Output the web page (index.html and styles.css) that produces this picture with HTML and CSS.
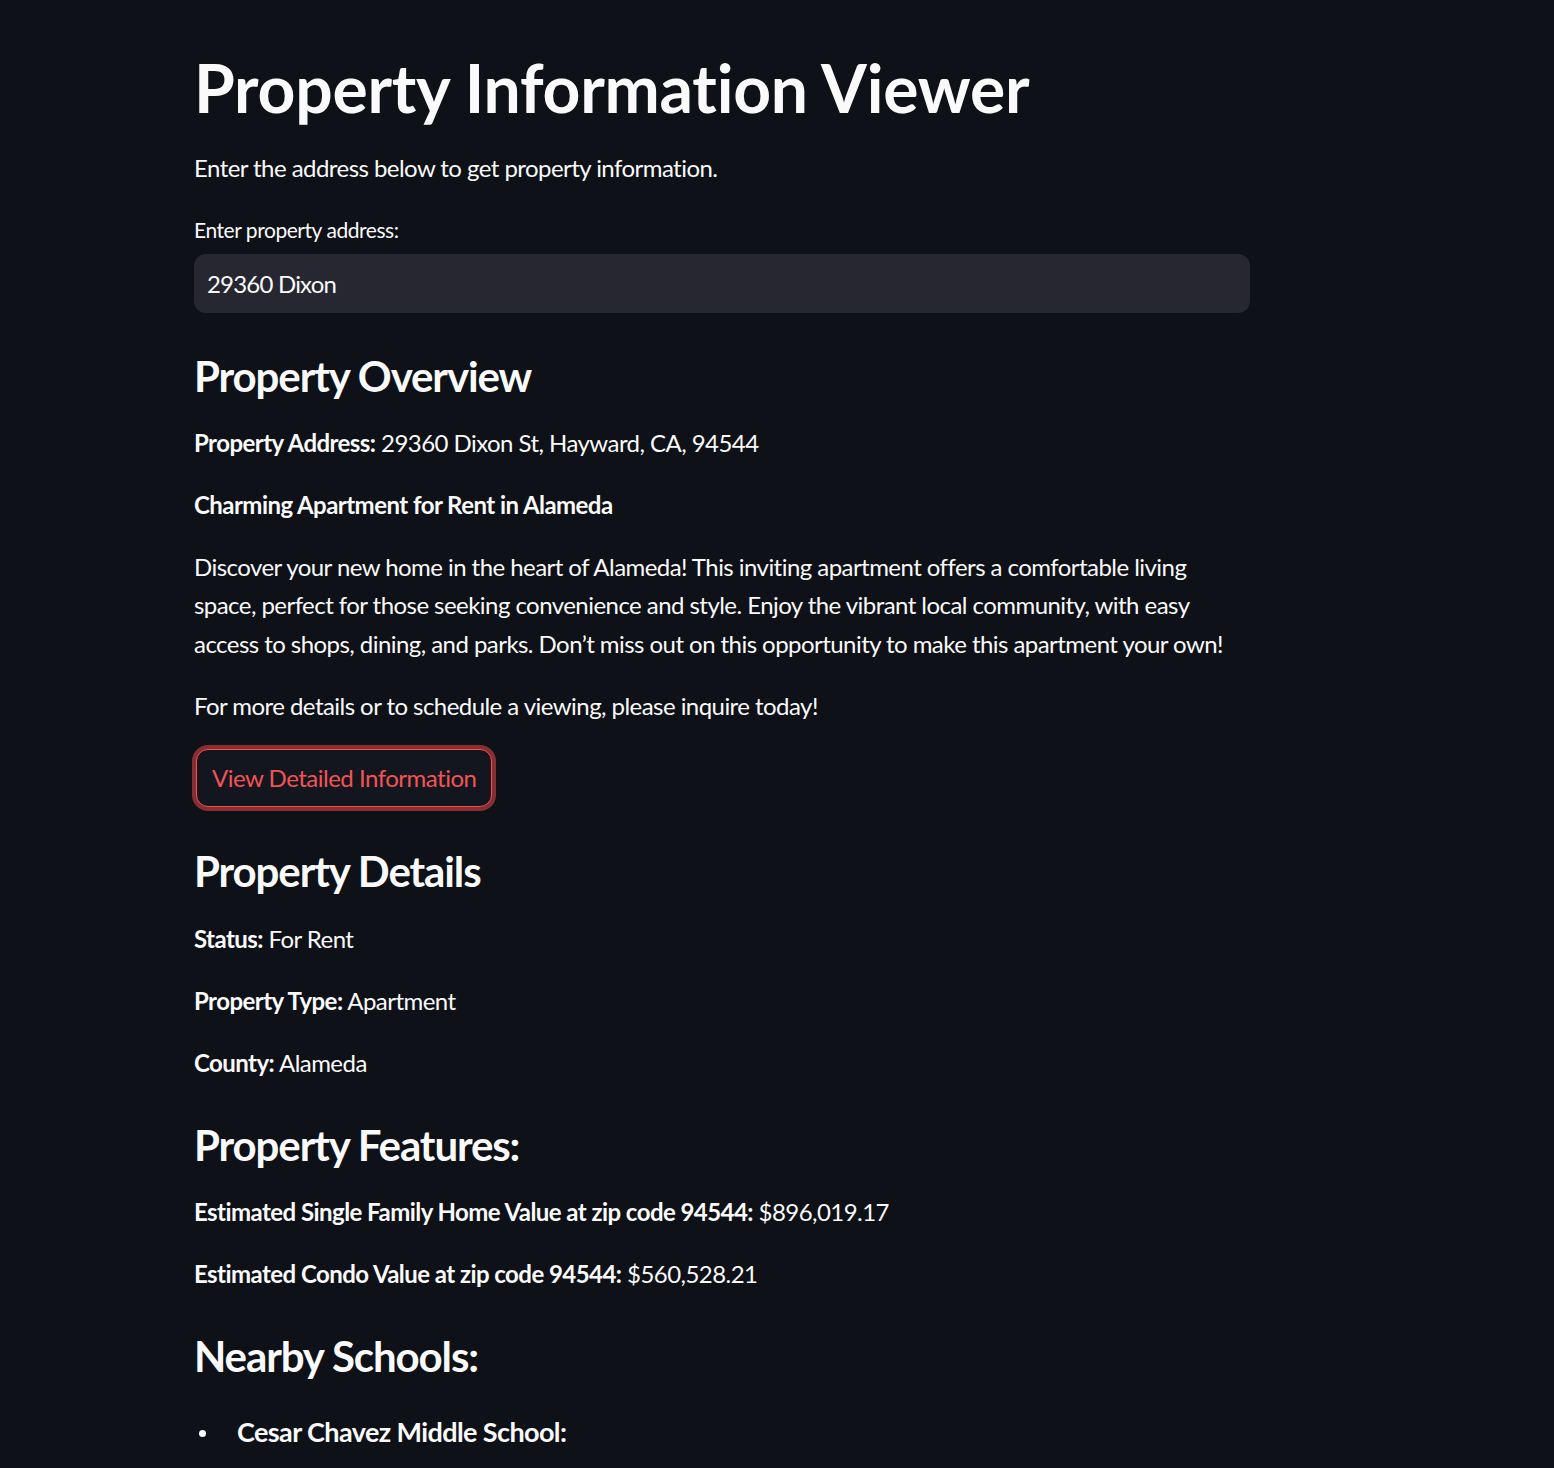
FILE: index.html
```html
<!DOCTYPE html>
<html lang="en">
<head>
<meta charset="utf-8">
<title>Property Information Viewer</title>
<link rel="stylesheet" href="styles.css">
</head>
<body>
<main class="main">
  <h1 class="title">Property Information Viewer</h1>
  <p class="text intro">Enter the address below to get property information.</p>
  <label class="label" for="addr">Enter property address:</label>
  <div class="input-wrap"><input id="addr" class="input" type="text" value="29360 Dixon"></div>

  <h3 class="heading h-overview">Property Overview</h3>
  <p class="text gap-sm"><strong>Property Address:</strong> 29360 Dixon St, Hayward, CA, 94544</p>
  <p class="text gap-md"><strong>Charming Apartment for Rent in Alameda</strong></p>
  <p class="text gap-md">Discover your new home in the heart of Alameda! This inviting apartment offers a comfortable living space, perfect for those seeking convenience and style. Enjoy the vibrant local community, with easy access to shops, dining, and parks. Don’t miss out on this opportunity to make this apartment your own!</p>
  <p class="text gap-md">For more details or to schedule a viewing, please inquire today!</p>
  <div class="btn-row"><button class="btn" type="button">View Detailed Information</button></div>

  <h3 class="heading h-details">Property Details</h3>
  <p class="text gap-md"><strong>Status:</strong> For Rent</p>
  <p class="text gap-md"><strong>Property Type:</strong> Apartment</p>
  <p class="text gap-md"><strong>County:</strong> Alameda</p>

  <h3 class="heading h-section">Property Features:</h3>
  <p class="text gap-sm"><strong>Estimated Single Family Home Value at zip code 94544:</strong> $896,019.17</p>
  <p class="text gap-md"><strong>Estimated Condo Value at zip code 94544:</strong> $560,528.21</p>

  <h3 class="heading h-section">Nearby Schools:</h3>
  <ul class="schools">
    <li class="school">Cesar Chavez Middle School:</li>
  </ul>
</main>
</body>
</html>
```

FILE: styles.css
```css
html, body {
  margin: 0;
  padding: 0;
  background: #0e1117;
  color: #fafafa;
  font-family: Lato, "Noto Sans", "Liberation Sans", sans-serif;
}

.main {
  display: flex;
  flex-direction: column;
  width: 1056px;
  padding: 48px 0 40px 194px;
}

.title {
  margin: 0;
  font-size: 66px;
  line-height: 79.2px;
  font-weight: 700;
  letter-spacing: -0.25px;
}

.text {
  margin: 0;
  font-size: 24px;
  line-height: 38.4px;
  font-weight: 400;
  letter-spacing: -0.55px;
}

.text strong { font-weight: 700; }

.intro { margin-top: 21.6px; }

.label {
  margin-top: 26px;
  font-size: 21px;
  line-height: 33.6px;
  letter-spacing: -0.45px;
}

.input-wrap {
  margin-top: 7.2px;
}

.input {
  box-sizing: border-box;
  width: 100%;
  height: 59px;
  border: none;
  border-radius: 12px;
  background: #262730;
  color: #fafafa;
  font-family: inherit;
  font-size: 24px;
  letter-spacing: -0.8px;
  padding: 0 13px;
  outline: none;
}

.heading {
  margin: 0;
  font-size: 42px;
  line-height: 50.4px;
  font-weight: 700;
  letter-spacing: -1.1px;
}

.h-overview { margin-top: 37.8px; }
.h-details { margin-top: 38.8px; }
.h-section { margin-top: 37.6px; }

.gap-sm { margin-top: 22.6px; }
.gap-md { margin-top: 23.6px; }

.btn-row {
  margin-top: 23.8px;
  padding-left: 2px;
}

.btn {
  box-sizing: border-box;
  height: 58px;
  padding: 0 15px;
  border: 1.5px solid #ff4b4b;
  border-radius: 12px;
  background: #13161f;
  color: #f25454;
  font-family: inherit;
  font-size: 24px;
  letter-spacing: -0.5px;
  box-shadow: 0 0 0 4px rgba(255, 75, 75, 0.5);
  cursor: pointer;
}

.schools {
  list-style: none;
  margin: 30.6px 0 0;
  padding: 0 0 0 5px;
}

.school {
  display: flex;
  align-items: center;
  gap: 31px;
  font-size: 27px;
  line-height: 40px;
  font-weight: 700;
  letter-spacing: -0.6px;
}

.school::before {
  content: "";
  flex: none;
  width: 7px;
  height: 7px;
  margin-top: 3px;
  border-radius: 50%;
  background: #fafafa;
}
```
